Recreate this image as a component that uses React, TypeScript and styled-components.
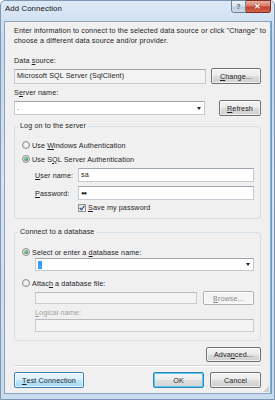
import React from "react";
import styled, { createGlobalStyle } from "styled-components";

const GlobalStyle = createGlobalStyle`
  html, body {
    margin: 0;
    padding: 0;
  }
  body {
    width: 275px;
    height: 400px;
    overflow: hidden;
    font-family: "Liberation Sans", Arial, sans-serif;
    font-size: 7.2px;
    letter-spacing: 0.1px;
    color: #1e1e1e;
  }
`;

const Window = styled.div`
  width: 275px;
  height: 400px;
  box-sizing: border-box;
  display: flex;
  flex-direction: column;
  border-radius: 5px 5px 0 0;
  background: linear-gradient(180deg, #dde9f6 0%, #c3d7ee 12%, #d6e4f3 45%, #c8dbef 100%);
  border: 1px solid #7f97b2;
`;

const TitleBar = styled.div`
  height: 20px;
  display: flex;
  align-items: flex-start;
  justify-content: space-between;
  padding-left: 4px;
  padding-right: 3px;
`;

const Title = styled.div`
  font-size: 7.8px;
  line-height: 16px;
  color: #111;
`;

const CaptionButtons = styled.div`
  display: flex;
  margin-top: -1px;
`;

const CaptionButton = styled.div<{ $close?: boolean }>`
  height: 13px;
  width: ${(p) => (p.$close ? "25px" : "15px")};
  box-sizing: border-box;
  display: flex;
  align-items: center;
  justify-content: center;
  border: 1px solid ${(p) => (p.$close ? "#7b2f21" : "#6b8099")};
  border-left-width: ${(p) => (p.$close ? "0" : "1px")};
  border-radius: ${(p) => (p.$close ? "0 0 3px 0" : "0 0 0 3px")};
  background: ${(p) =>
    p.$close
      ? "linear-gradient(180deg, #eab1a4 0%, #d77a66 45%, #c2402a 55%, #d2654c 100%)"
      : "linear-gradient(180deg, #eef3f9 0%, #d7e2ee 45%, #bccbdc 55%, #cddaea 100%)"};
  color: ${(p) => (p.$close ? "#fff" : "#4a5d73")};
  font-weight: bold;
  font-size: ${(p) => (p.$close ? "8px" : "7px")};
  text-shadow: ${(p) => (p.$close ? "0 0 1px #5a1a10" : "none")};
`;

const Client = styled.div`
  flex: 1;
  position: relative;
  margin: 0 3px 5px 3px;
  border: 1px solid #8da3bb;
  box-shadow: 1px 0 0 #5ea6d2;
  background: #f0f0f0;
  padding: 4px 9px 0 9px;
  display: flex;
  flex-direction: column;
`;

const Intro = styled.div`
  line-height: 10px;
  white-space: nowrap;
  letter-spacing: 0.12px;
`;

const Label = styled.div<{ $top?: number; $disabled?: boolean }>`
  line-height: 10px;
  margin-top: ${(p) => p.$top ?? 0}px;
  color: ${(p) => (p.$disabled ? "#a0a0a0" : "#1e1e1e")};
  white-space: nowrap;
`;

const Row = styled.div<{ $top?: number; $indent?: number; $between?: boolean; $gap?: number }>`
  display: flex;
  align-items: center;
  gap: ${(p) => p.$gap ?? 5}px;
  margin-top: ${(p) => p.$top ?? 0}px;
  padding-left: ${(p) => p.$indent ?? 0}px;
  justify-content: ${(p) => (p.$between ? "space-between" : "flex-start")};
`;

const TextBox = styled.div<{ $h?: number; $w?: number; $bg?: string; $disabled?: boolean }>`
  box-sizing: border-box;
  height: ${(p) => p.$h ?? 14}px;
  ${(p) => (p.$w ? `width: ${p.$w}px;` : "flex: 1;")}
  min-width: 0;
  border: 1px solid ${(p) => (p.$disabled ? "#c9ced4" : "#c3cad2")};
  border-top-color: ${(p) => (p.$disabled ? "#b7bcc2" : "#9ea6b0")};
  background: ${(p) => p.$bg ?? "#ffffff"};
  display: flex;
  align-items: center;
  padding: 0 2px;
  line-height: 10px;
  white-space: nowrap;
`;

const Combo = styled(TextBox)`
  justify-content: space-between;
  padding-right: 3px;
`;

const Arrow = styled.span`
  width: 0;
  height: 0;
  border-left: 2.5px solid transparent;
  border-right: 2.5px solid transparent;
  border-top: 3px solid #222;
`;

const Selected = styled.span`
  background: #3399ff;
  color: #fff;
  padding: 0 1px;
  line-height: 8px;
`;

const Password = styled.span`
  letter-spacing: -1px;
  font-size: 6px;
`;

const Button = styled.div<{ $w: number; $h?: number; $kind?: "normal" | "hot" | "default" | "disabled" }>`
  box-sizing: border-box;
  width: ${(p) => p.$w}px;
  height: ${(p) => p.$h ?? 15}px;
  flex-shrink: 0;
  display: flex;
  align-items: center;
  justify-content: center;
  border-radius: 2px;
  white-space: nowrap;
  border: 1px solid
    ${(p) =>
      p.$kind === "hot" || p.$kind === "default"
        ? "#3c7fb1"
        : p.$kind === "disabled"
        ? "#adb2b5"
        : "#707070"};
  color: ${(p) => (p.$kind === "disabled" ? "#8a8a8a" : "#1e1e1e")};
  background: ${(p) =>
    p.$kind === "hot"
      ? "linear-gradient(180deg, #eaf6fd 0%, #d9f0fc 48%, #bee6fd 52%, #a7d9f5 100%)"
      : p.$kind === "disabled"
      ? "#f4f4f4"
      : p.$kind === "default"
      ? "linear-gradient(180deg, #f6f6f6 0%, #ececec 48%, #dfdfdf 52%, #d4d4d4 100%)"
      : "linear-gradient(180deg, #f2f2f2 0%, #ebebeb 48%, #dddddd 52%, #cfcfcf 100%)"};
  box-shadow: ${(p) =>
    p.$kind === "default" ? "inset 0 0 0 1px #48d0f6" : "inset 0 0 0 1px rgba(255,255,255,0.7)"};
`;

const Group = styled.fieldset<{ $top: number; $pt: number; $pb: number }>`
  margin: ${(p) => p.$top}px 0 0 0;
  padding: ${(p) => p.$pt}px 6px ${(p) => p.$pb}px 7px;
  border: 1px solid #d5dfe5;
  border-radius: 3px;
  min-inline-size: 0;
`;

const Legend = styled.legend`
  padding: 0 2px;
  margin-left: -4px;
  line-height: 10px;
  color: #1e1e1e;
`;

const Option = styled.div<{ $top?: number }>`
  display: flex;
  align-items: center;
  gap: 2px;
  height: 10px;
  margin-top: ${(p) => p.$top ?? 0}px;
  white-space: nowrap;
`;

const Radio = styled.span<{ $checked?: boolean }>`
  box-sizing: border-box;
  width: 8px;
  height: 8px;
  border-radius: 50%;
  border: 1px solid #8e8f8f;
  background: radial-gradient(circle at 50% 50%, #ffffff 0%, #e6e6e6 60%, #cfcfcf 100%);
  display: flex;
  align-items: center;
  justify-content: center;
  &::after {
    content: "";
    display: ${(p) => (p.$checked ? "block" : "none")};
    width: 4px;
    height: 4px;
    border-radius: 50%;
    background: radial-gradient(circle at 35% 35%, #a3e4a8 0%, #3c8d5e 60%, #1d5a3c 100%);
  }
`;

const CheckBox = styled.span`
  box-sizing: border-box;
  width: 8px;
  height: 8px;
  border: 1px solid #8e8f8f;
  background: linear-gradient(135deg, #dcdcdc 0%, #ffffff 100%);
  display: flex;
  align-items: center;
  justify-content: center;
`;

const FieldLabel = styled.span`
  width: 43px;
  flex-shrink: 0;
  white-space: nowrap;
`;

const InlineText = styled.span`
  line-height: 10px;
`;

const RightRow = styled.div`
  display: flex;
  justify-content: flex-end;
  margin-top: 6px;
`;

const Separator = styled.div`
  margin-top: 3px;
  height: 0;
  border-top: 1px solid #d5d5d5;
  border-bottom: 1px solid #ffffff;
`;

const Footer = styled.div`
  display: flex;
  align-items: center;
  gap: 6px;
  margin-top: 5px;
`;

const Spacer = styled.div`
  flex: 1;
`;

const Grip = styled.div`
  position: absolute;
  right: 1px;
  bottom: 1px;
  width: 6px;
  height: 6px;
  background: radial-gradient(circle, #a9a9a9 0.6px, transparent 0.8px) 0 0 / 2px 2px;
  clip-path: polygon(100% 0, 100% 100%, 0 100%);
`;

export default function App() {
  return (
    <>
      <GlobalStyle />
      <Window>
        <TitleBar>
          <Title>Add Connection</Title>
          <CaptionButtons>
            <CaptionButton>?</CaptionButton>
            <CaptionButton $close>✕</CaptionButton>
          </CaptionButtons>
        </TitleBar>
        <Client>
          <Intro>
            Enter information to connect to the selected data source or click "Change" to
            <br />
            choose a different data source and/or provider.
          </Intro>

          <Label $top={10}>
            Data <u>s</u>ource:
          </Label>
          <Row $top={2}>
            <TextBox $h={15} $bg="#f3f3f3">
              Microsoft SQL Server (SqlClient)
            </TextBox>
            <Button $w={50} $h={16}>
              <u>C</u>hange...
            </Button>
          </Row>

          <Label $top={4}>
            S<u>e</u>rver name:
          </Label>
          <Row $top={2} $between>
            <Combo $w={191} $h={14}>
              <span>.</span>
              <Arrow />
            </Combo>
            <Button $w={42} $h={16}>
              <u>R</u>efresh
            </Button>
          </Row>

          <Group $top={5} $pt={9} $pb={5}>
            <Legend>Log on to the server</Legend>
            <Option>
              <Radio />
              <span>
                Use <u>W</u>indows Authentication
              </span>
            </Option>
            <Option $top={4}>
              <Radio $checked />
              <span>
                Use S<u>Q</u>L Server Authentication
              </span>
            </Option>
            <Row $top={4} $indent={13} $gap={0}>
              <FieldLabel>
                <u>U</u>ser name:
              </FieldLabel>
              <TextBox $h={14}>sa</TextBox>
            </Row>
            <Row $top={4} $indent={13} $gap={0}>
              <FieldLabel>
                <u>P</u>assword:
              </FieldLabel>
              <TextBox $h={14}>
                <Password>●●</Password>
              </TextBox>
            </Row>
            <Row $top={3} $indent={56} $gap={2}>
              <CheckBox>
                <svg width="6" height="6" viewBox="0 0 6 6">
                  <path d="M0.8 3 L2.4 4.8 L5.4 0.8" fill="none" stroke="#2a4e8a" strokeWidth="1.2" />
                </svg>
              </CheckBox>
              <InlineText>
                <u>S</u>ave my password
              </InlineText>
            </Row>
          </Group>

          <Group $top={8} $pt={10} $pb={8}>
            <Legend>Connect to a database</Legend>
            <Option>
              <Radio $checked />
              <span>
                Select or enter a <u>d</u>atabase name:
              </span>
            </Option>
            <Row $top={1} $indent={13}>
              <Combo $h={13}>
                <Selected>.</Selected>
                <Arrow />
              </Combo>
            </Row>
            <Option $top={7}>
              <Radio />
              <span>
                Attac<u>h</u> a database file:
              </span>
            </Option>
            <Row $top={3} $indent={13} $gap={6}>
              <TextBox $h={12} $bg="#f4f4f4" $disabled />
              <Button $w={51} $h={14} $kind="disabled">
                <u>B</u>rowse...
              </Button>
            </Row>
            <Row $top={3} $indent={13}>
              <Label $disabled>
                <u>L</u>ogical name:
              </Label>
            </Row>
            <Row $top={1} $indent={13}>
              <TextBox $h={13} $bg="#f4f4f4" $disabled />
            </Row>
          </Group>

          <RightRow>
            <Button $w={55} $h={15}>
              Adva<u>n</u>ced...
            </Button>
          </RightRow>

          <Separator />

          <Footer>
            <Button $w={70} $h={16} $kind="hot">
              <u>T</u>est Connection
            </Button>
            <Spacer />
            <Button $w={51} $h={16} $kind="default">
              OK
            </Button>
            <Button $w={51} $h={16}>
              Cancel
            </Button>
          </Footer>
          <Grip />
        </Client>
      </Window>
    </>
  );
}
